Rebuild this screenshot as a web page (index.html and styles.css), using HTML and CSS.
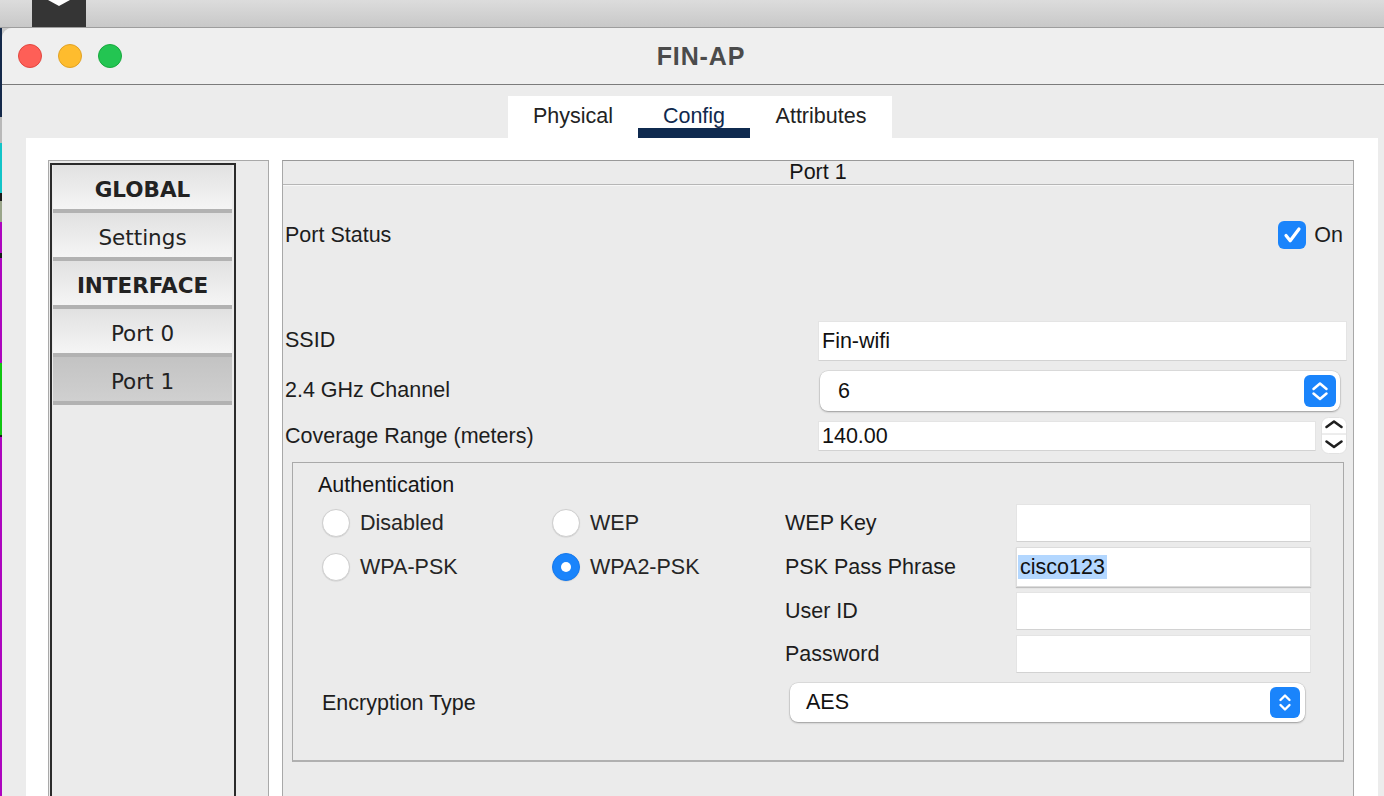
FILE: index.html
```html
<!DOCTYPE html>
<html lang="en">
<head>
<meta charset="utf-8">
<title>FIN-AP</title>
<link rel="stylesheet" href="styles.css">
</head>
<body>
<div class="topbar">
  <div class="dock-icon">
    <svg width="54" height="27" viewBox="0 0 54 27"><polygon points="16,0 38,0 27,6" fill="#ffffff"/></svg>
  </div>
</div>
<div class="desk">
  <div class="edge">
    <i class="seg s-navy"></i><i class="seg s-grey"></i><i class="seg s-cyan"></i><i class="seg s-black"></i><i class="seg s-olive"></i><i class="seg s-mag1"></i><i class="seg s-black2"></i><i class="seg s-mag2"></i><i class="seg s-green"></i><i class="seg s-black3"></i><i class="seg s-mag3"></i>
  </div>
  <div class="window">
    <div class="titlebar">
      <div class="lights">
        <span class="light red"></span>
        <span class="light yellow"></span>
        <span class="light green"></span>
      </div>
      <div class="title">FIN-AP</div>
      <div></div>
    </div>
    <div class="winbody">
      <div class="tabs">
        <div class="tabstrip">
          <div class="tab t-phys">Physical</div>
          <div class="tab t-conf active">Config</div>
          <div class="tab t-attr">Attributes</div>
        </div>
      </div>
      <div class="sheet">
        <div class="sidebar">
          <div class="sidelist">
            <div class="sbtn bold">GLOBAL</div>
            <div class="sbtn">Settings</div>
            <div class="sbtn bold">INTERFACE</div>
            <div class="sbtn">Port 0</div>
            <div class="sbtn selected">Port 1</div>
          </div>
        </div>
        <div class="panel">
          <div class="panel-head">Port 1</div>
          <div class="panel-body">
            <div class="row-status">
              <span class="lbl">Port Status</span>
              <span class="check-wrap">
                <svg width="28" height="28" viewBox="0 0 28 28"><rect x="0" y="0" width="28" height="28" rx="6" fill="#1a84fb"/><path d="M8 14.5 L12.2 19.8 L21 8" fill="none" stroke="#ffffff" stroke-width="3.2" stroke-linecap="round" stroke-linejoin="round"/></svg>
                <span class="lbl">On</span>
              </span>
            </div>
            <div class="frow r-ssid">
              <span class="lbl">SSID</span>
              <div class="input tall">Fin-wifi</div>
            </div>
            <div class="frow r-chan">
              <span class="lbl">2.4 GHz Channel</span>
              <div class="select chan">
                <span>6</span>
                <svg width="32" height="32" viewBox="0 0 32 32"><rect width="32" height="32" rx="6" fill="#1a84fb"/><path d="M9.5 14 L16 8.5 L22.5 14 M9.5 18.5 L16 24 L22.5 18.5" fill="none" stroke="#ffffff" stroke-width="2.5" stroke-linecap="round" stroke-linejoin="round"/></svg>
              </div>
            </div>
            <div class="frow r-cov">
              <span class="lbl">Coverage Range (meters)</span>
              <div class="cov">
                <div class="input short">140.00</div>
                <svg class="spinner" width="26" height="37" viewBox="0 0 26 37"><rect x="0.5" y="0.5" width="25" height="36" rx="7" fill="#ffffff" stroke="#e2e2e2"/><line x1="1" y1="17" x2="25" y2="17" stroke="#dadada"/><path d="M5.5 10 L13 4.5 L20.5 10" fill="none" stroke="#1e1e1e" stroke-width="2.6" stroke-linecap="round" stroke-linejoin="round"/><path d="M5.5 24.5 L13 30 L20.5 24.5" fill="none" stroke="#1e1e1e" stroke-width="2.6" stroke-linecap="round" stroke-linejoin="round"/></svg>
              </div>
            </div>
            <div class="auth">
              <div class="auth-title">Authentication</div>
              <div class="auth-grid">
                <div class="radios">
                  <span class="ropt"><span class="radio"></span>Disabled</span>
                  <span class="ropt"><span class="radio"></span>WEP</span>
                </div>
                <span class="lbl">WEP Key</span>
                <div class="input"></div>

                <div class="radios">
                  <span class="ropt"><span class="radio"></span>WPA-PSK</span>
                  <span class="ropt"><span class="radio on"></span>WPA2-PSK</span>
                </div>
                <span class="lbl">PSK Pass Phrase</span>
                <div class="input focus"><span class="sel">cisco123</span></div>

                <div></div>
                <span class="lbl">User ID</span>
                <div class="input"></div>

                <div></div>
                <span class="lbl">Password</span>
                <div class="input"></div>
              </div>
              <div class="enc-row">
                <span class="lbl">Encryption Type</span>
                <div class="select enc">
                  <span>AES</span>
                  <svg width="30" height="31" viewBox="0 0 30 31"><rect width="30" height="31" rx="6" fill="#1a84fb"/><path d="M10.5 13 L15 8.5 L19.5 13 M10.5 18 L15 22.5 L19.5 18" fill="none" stroke="#ffffff" stroke-width="2.4" stroke-linecap="round" stroke-linejoin="round"/></svg>
                </div>
              </div>
            </div>
          </div>
        </div>
      </div>
    </div>
  </div>
</div>
</body>
</html>
```
FILE: styles.css
```css
* { box-sizing: border-box; }

html, body {
  margin: 0;
  padding: 0;
}

body {
  width: 1384px;
  height: 796px;
  overflow: hidden;
  background: #cacaca;
  font-family: "Liberation Sans", Arial, sans-serif;
  color: #1d1d1d;
}

/* ---------- desktop behind ---------- */
.topbar {
  height: 28px;
  border-bottom: 1px solid #9d9d9d;
  background: linear-gradient(#dcdcdc, #c8c8c8);
  display: flex;
}

.dock-icon {
  margin-left: 32px;
  width: 54px;
  height: 27px;
  background: #353535;
  display: flex;
}

.desk {
  display: flex;
  height: 768px;
  background: #c9c9c9;
}

.edge {
  width: 2px;
  flex: none;
  display: flex;
  flex-direction: column;
}

.seg { display: block; width: 2px; }
.s-navy { height: 89px; background: #14294a; }
.s-grey { height: 26px; background: #b9b9b9; }
.s-cyan { height: 50px; background: #12c4c8; }
.s-black { height: 8px; background: #1a1a1a; }
.s-olive { height: 21px; background: #9aa58a; }
.s-mag1 { height: 31px; background: #ad05bf; }
.s-black2 { height: 5px; background: #1a1a1a; }
.s-mag2 { height: 105px; background: #ad05bf; }
.s-green { height: 72px; background: #12c412; }
.s-black3 { height: 2px; background: #1a1a1a; }
.s-mag3 { flex: 1; background: #ad05bf; }

/* ---------- window ---------- */
.window {
  width: 1398px;
  flex: none;
  background: #ececec;
  border-top-left-radius: 10px;
  overflow: hidden;
  display: flex;
  flex-direction: column;
}

.titlebar {
  height: 57px;
  flex: none;
  background: #efefef;
  border-bottom: 1px solid #7b7b7b;
  display: grid;
  grid-template-columns: 1fr auto 1fr;
  align-items: center;
}

.lights {
  display: flex;
  gap: 16px;
  padding-left: 16px;
}

.light {
  width: 24px;
  height: 24px;
  border-radius: 50%;
}
.light.red { background: #fe5f57; border: 1px solid #e2463f; }
.light.yellow { background: #febc2e; border: 1px solid #e1a224; }
.light.green { background: #23c552; border: 1px solid #17a93d; }

.title {
  font-family: "Liberation Sans", Arial, sans-serif;
  font-weight: bold;
  font-size: 25px;
  letter-spacing: 0.9px;
  color: #4b4b4b;
}

.winbody {
  flex: 1;
  display: flex;
  flex-direction: column;
  padding: 11px 22px 0 24px;
}

/* ---------- tabs ---------- */
.tabs {
  display: flex;
  justify-content: center;
  padding-right: 4px;
}

.tabstrip {
  display: flex;
  height: 42px;
  background: #ffffff;
}

.tab {
  display: flex;
  align-items: center;
  justify-content: center;
  padding-bottom: 2px;
  font-size: 21.5px;
  color: #222222;
}
.t-phys { width: 130px; }
.t-conf { width: 112px; }
.t-attr { width: 142px; }

.tab.active {
  color: #10294e;
  box-shadow: inset 0 -10px 0 #0f2a4f;
}

/* ---------- sheet ---------- */
.sheet {
  flex: 1;
  background: #ffffff;
  display: grid;
  grid-template-columns: 221px 1072px;
  column-gap: 13px;
  padding: 22px 24px 0 22px;
  min-height: 0;
}

/* ---------- sidebar ---------- */
.sidebar {
  border: 1px solid #a9a9a9;
  background: #ebebeb;
  margin-bottom: -30px;
  padding: 2px 0 0 1px;
}

.sidelist {
  width: 186px;
  height: 100%;
  border: 2px solid #2b2b2b;
  background: #ebebeb;
  padding: 0 2px 0 1px;
  display: flex;
  flex-direction: column;
}

.sbtn {
  height: 48px;
  flex: none;
  padding-top: 4px;
  border-bottom: 4px solid #b2b2b2;
  background: linear-gradient(#e1e1e1, #f5f5f5);
  display: flex;
  align-items: center;
  justify-content: center;
  font-family: "DejaVu Sans", Verdana, sans-serif;
  font-size: 21.5px;
  color: #222222;
}

.sbtn.bold { font-weight: bold; }

.sbtn.selected {
  background: linear-gradient(#c3c3c3, #d0d0d0);
}

/* ---------- panel ---------- */
.panel {
  border: 1px solid #a8a8a8;
  border-top-color: #999999;
  background: #ebebeb;
  margin-bottom: -30px;
  display: flex;
  flex-direction: column;
}

.panel-head {
  height: 24px;
  flex: none;
  border-bottom: 1px solid #b6b6b6;
  box-shadow: 0 1px 0 #f7f7f7;
  text-align: center;
  line-height: 23px;
  font-size: 21.5px;
  color: #151515;
}

.panel-body {
  display: flex;
  flex-direction: column;
  padding: 0 6px 0 2px;
}

.lbl {
  font-size: 21.5px;
  line-height: 24px;
  color: #1d1d1d;
  white-space: nowrap;
}

.row-status {
  margin-top: 27px;
  height: 46px;
  display: flex;
  align-items: center;
  justify-content: space-between;
}

.check-wrap {
  display: flex;
  align-items: center;
  gap: 8px;
  margin-right: 4px;
}

.frow {
  display: grid;
  grid-template-columns: 533px 1fr;
  grid-template-rows: 100%;
  align-items: center;
}

.r-ssid { margin-top: 63px; height: 40px; }
.r-ssid .lbl { margin-top: -3px; }
.r-chan { margin-top: 10px; height: 40px; }
.r-chan .lbl { margin-top: -2px; }
.r-cov { margin-top: 10px; height: 30px; }

.input {
  background: #ffffff;
  border: 1px solid #e4e4e4;
  border-bottom-color: #d2d2d2;
  height: 38px;
  padding: 0 3px;
  display: flex;
  align-items: center;
  font-size: 21.5px;
  color: #111111;
}

.input.tall { height: 40px; }

.input.focus {
  border-color: #dcdcdc;
  box-shadow: 0 1px 1px rgba(0, 0, 0, 0.18);
  padding-left: 1px;
}

.sel {
  background: #b3d7ff;
  padding: 0 2px;
  line-height: 24px;
}

.select {
  background: #ffffff;
  border-radius: 8px;
  box-shadow: 0 0 0 0.5px rgba(0, 0, 0, 0.12), 0 1px 2px rgba(0, 0, 0, 0.3);
  display: flex;
  align-items: center;
  justify-content: space-between;
  font-size: 21.5px;
  color: #111111;
}

.select.chan {
  height: 40px;
  margin: 0 7px 0 2px;
  padding: 0 4px 0 18px;
}

.cov {
  display: flex;
  align-items: center;
  height: 30px;
}

.input.short {
  width: 498px;
  height: 30px;
}

.spinner {
  margin: -4px 0 -3px 5px;
  flex: none;
}

/* ---------- authentication ---------- */
.auth {
  margin: 11px 3px 0 7px;
  height: 300px;
  border: 1px solid #a9a9a9;
  border-bottom: 2px solid #b0b0b0;
  padding-left: 29px;
  display: flex;
  flex-direction: column;
}

.auth-title {
  margin: 10px 0 0 -4px;
  font-size: 21.5px;
  line-height: 24px;
  color: #151515;
}

.auth-grid {
  margin-top: 7px;
  display: grid;
  grid-template-columns: 463px 231px 295px;
  grid-template-rows: 38px 40px 38px 38px;
  row-gap: 5px;
  align-items: center;
}

.auth-grid .input { height: 100%; }

.radios {
  display: flex;
}

.ropt {
  width: 230px;
  display: flex;
  align-items: center;
  gap: 10px;
  font-size: 21.5px;
  color: #262626;
}

.radio {
  width: 28px;
  height: 28px;
  flex: none;
  border-radius: 50%;
  background: #ffffff;
  border: 1px solid #cfcfcf;
  box-shadow: 0 0.5px 1px rgba(0, 0, 0, 0.12);
}

.radio.on {
  background: #1a84fb;
  border-color: #1579ee;
  display: grid;
  place-items: center;
}

.radio.on::after {
  content: "";
  width: 10px;
  height: 10px;
  border-radius: 50%;
  background: #ffffff;
}

.enc-row {
  margin-top: 10px;
  display: grid;
  grid-template-columns: 463px 526px;
  align-items: center;
}

.select.enc {
  height: 39px;
  margin: 0 6px 0 5px;
  padding: 0 5px 0 16px;
}
```
